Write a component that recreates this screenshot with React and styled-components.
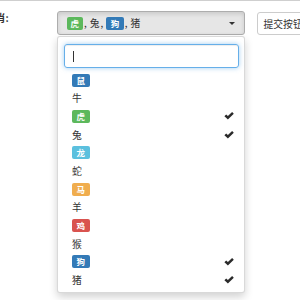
import React from "react";
import styled, { createGlobalStyle } from "styled-components";

const Global = createGlobalStyle`
  html, body { margin: 0; padding: 0; overflow: hidden; background: #fff; }
  body { font-family: "Noto Sans CJK SC", "Noto Sans", "Liberation Sans", sans-serif; color: #333; font-size: 9.8px; }
`;

const Page = styled.div`
  width: 300px;
  height: 300px;
  border-top: 1px solid #cfcfcf;
  box-sizing: border-box;
  overflow: hidden;
`;

const Row = styled.div`
  display: flex;
  align-items: flex-start;
  padding-top: 10px;
  white-space: nowrap;
`;

const Label = styled.div`
  flex: 0 0 auto;
  width: 71px;
  margin-left: -14px;
  font-weight: bold;
  font-size: 9.8px;
  line-height: 14px;
  padding-top: 0;
`;

const SelectWrap = styled.div`
  position: relative;
  flex: 0 0 auto;
  width: 188px;
`;

const SelectButton = styled.div`
  box-sizing: border-box;
  height: 24px;
  display: flex;
  align-items: center;
  padding: 0 8px 0 8.5px;
  background: #e6e6e6;
  border: 1px solid #adadad;
  border-radius: 3px;
  box-shadow: inset 0 2px 4px rgba(0, 0, 0, 0.125);
  font-size: 9.8px;
`;

const Selected = styled.div`
  flex: 1;
  display: flex;
  align-items: center;
`;

const Sep = styled.span`
  margin: 0 3px 0 1px;
`;

const Caret = styled.span`
  width: 0;
  height: 0;
  border-top: 3px solid #333;
  border-left: 3px solid transparent;
  border-right: 3px solid transparent;
  margin-right: 1px;
`;

const colors = {
  primary: "#337ab7",
  success: "#5cb85c",
  info: "#5bc0de",
  warning: "#f0ad4e",
  danger: "#d9534f",
};

const Badge = styled.span`
  display: inline-block;
  height: 13px;
  line-height: 13px;
  padding: 0 ${(p) => (p.$wide ? "4.5px" : "4px")};
  font-size: 8.5px;
  font-weight: bold;
  color: #fff;
  border-radius: 2px;
  background: ${(p) => colors[p.$tone]};
`;

const Menu = styled.div`
  position: absolute;
  top: 25px;
  left: 0;
  right: 0;
  box-sizing: border-box;
  background: #fff;
  border: 1px solid rgba(0, 0, 0, 0.15);
  border-radius: 3px;
  box-shadow: 0 4px 9px rgba(0, 0, 0, 0.18);
  padding: 3px 0 3px;
  z-index: 2;
`;

const SearchBox = styled.div`
  padding: 4px 5.5px 3px;
`;

const SearchInput = styled.div`
  box-sizing: border-box;
  height: 24px;
  border: 1px solid #66afe9;
  border-radius: 3px;
  box-shadow: inset 0 1px 1px rgba(0, 0, 0, 0.075), 0 0 5px rgba(102, 175, 233, 0.6);
  display: flex;
  align-items: center;
  padding-left: 8px;
`;

const TextCaret = styled.span`
  width: 1px;
  height: 11px;
  background: #333;
`;

const Item = styled.div`
  height: 18.2px;
  display: flex;
  align-items: center;
  justify-content: space-between;
  padding: 0 10px 0 14px;
  font-size: 9.8px;
`;

const Check = () => (
  <svg width="10" height="8" viewBox="0 0 10 8">
    <path d="M0.4 4.3 L2.2 2.5 L3.9 4.1 L8.1 0 L9.8 1.8 L3.9 7.6 Z" fill="#2b2b2b" />
  </svg>
);

const SubmitButton = styled.div`
  flex: 0 0 auto;
  margin-left: 11.5px;
  margin-top: 1px;
  box-sizing: border-box;
  height: 23px;
  display: flex;
  align-items: center;
  padding: 0 8px 0 6px;
  border: 1px solid #ccc;
  border-radius: 3px;
  background: #fff;
  font-size: 9.8px;
`;

const items = [
  { t: "鼠", tone: "primary" },
  { t: "牛" },
  { t: "虎", tone: "success", on: true },
  { t: "兔", on: true },
  { t: "龙", tone: "info" },
  { t: "蛇" },
  { t: "马", tone: "warning" },
  { t: "羊" },
  { t: "鸡", tone: "danger" },
  { t: "猴" },
  { t: "狗", tone: "primary", on: true },
  { t: "猪", on: true },
];

export default function App() {
  return (
    <Page>
      <Global />
      <Row>
        <Label>生肖:</Label>
        <SelectWrap>
          <SelectButton>
            <Selected>
              <Badge $tone="success">虎</Badge>
              <Sep>,</Sep>
              <span>兔</span>
              <Sep>,</Sep>
              <Badge $tone="primary" $wide>狗</Badge>
              <Sep>,</Sep>
              <span>猪</span>
            </Selected>
            <Caret />
          </SelectButton>
          <Menu>
            <SearchBox>
              <SearchInput>
                <TextCaret />
              </SearchInput>
            </SearchBox>
            {items.map((it) => (
              <Item key={it.t}>
                {it.tone ? <Badge $tone={it.tone} $wide>{it.t}</Badge> : <span>{it.t}</span>}
                {it.on && <Check />}
              </Item>
            ))}
          </Menu>
        </SelectWrap>
        <SubmitButton>提交按钮</SubmitButton>
      </Row>
    </Page>
  );
}
